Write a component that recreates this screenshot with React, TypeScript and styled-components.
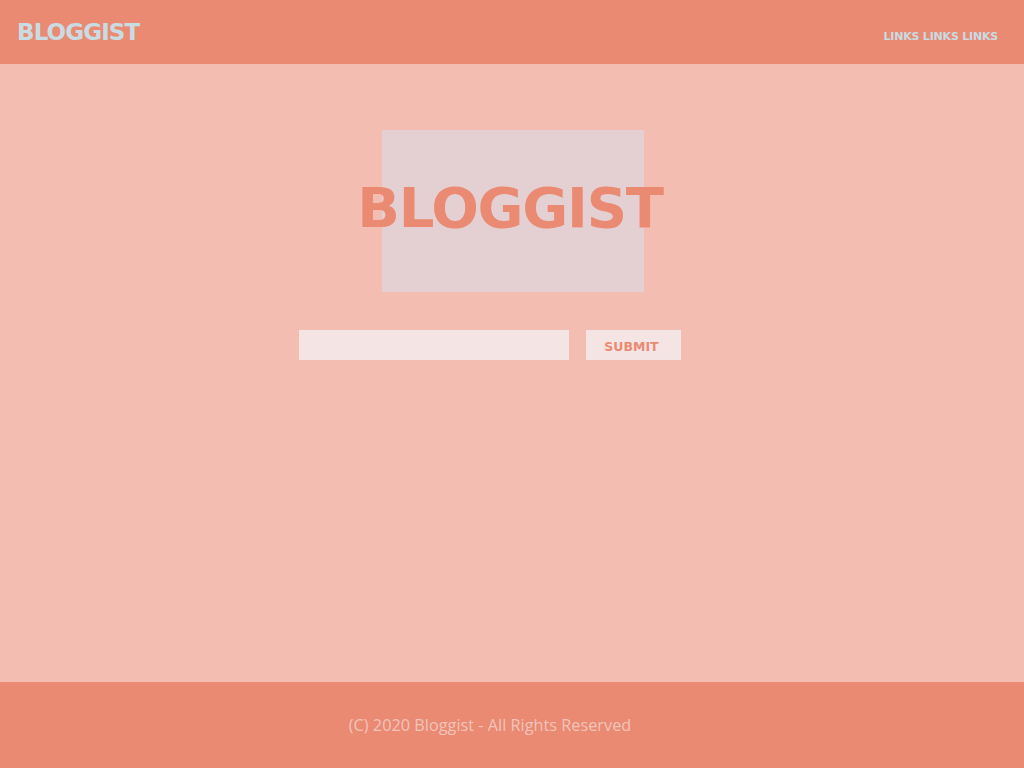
import React from "react";
import styled, { createGlobalStyle } from "styled-components";

const Global = createGlobalStyle`
  html, body { margin: 0; padding: 0; }
  body { font-family: "DejaVu Sans", sans-serif; background: #f3beb1; }
`;

const Page = styled.div`
  display: flex;
  flex-direction: column;
  height: 768px;
  width: 1024px;
`;

const Header = styled.header`
  height: 64px;
  background: #ea8a72;
  display: flex;
  align-items: center;
  justify-content: space-between;
  padding: 0 26px 0 17px;
`;

const Logo = styled.div`
  font-family: "DejaVu Sans", sans-serif;
  font-weight: 700;
  font-size: 23px;
  color: #c8dce2;
  letter-spacing: -0.9px;
  margin-top: 0px;
`;

const Links = styled.nav`
  font-family: "DejaVu Sans", sans-serif;
  font-weight: 700;
  font-size: 11px;
  letter-spacing: -0.2px;
  color: #c8dce2;
  margin-top: 8px;
`;

const Main = styled.main`
  flex: 1;
  display: flex;
  flex-direction: column;
  align-items: center;
  padding-top: 66px;
`;

const Hero = styled.div`
  width: 262px;
  height: 162px;
  background: #e4d0d2;
  display: flex;
  align-items: center;
  justify-content: center;
  margin-left: 2px;
`;

const HeroTitle = styled.h1`
  margin: 0;
  font-family: "DejaVu Sans", sans-serif;
  font-weight: 700;
  font-size: 56px;
  letter-spacing: -1.2px;
  color: #ea8a72;
  white-space: nowrap;
  margin-top: -8px;
  margin-left: -6px;
`;

const Form = styled.form`
  display: flex;
  gap: 17px;
  margin-top: 38px;
  margin-left: -44px;
`;

const Input = styled.input`
  width: 270px;
  height: 30px;
  box-sizing: border-box;
  border: none;
  background: #f5e4e4;
  outline: none;
  padding: 0 8px;
`;

const Button = styled.button`
  width: 95px;
  height: 30px;
  border: none;
  background: #f5e4e4;
  color: #ea8a72;
  font-family: "DejaVu Sans", sans-serif;
  font-weight: 700;
  font-size: 12.5px;
  padding: 0;
  padding-right: 4px;
  padding-top: 2px;
`;

const Footer = styled.footer`
  height: 86px;
  background: #ea8a72;
  display: flex;
  align-items: center;
  justify-content: center;
  padding-right: 44px;
`;

const FooterText = styled.p`
  margin: 0;
  font-family: "Open Sans", sans-serif;
  font-size: 16.3px;
  color: #f0c4ba;
`;

export default function App() {
  return (
    <Page>
      <Global />
      <Header>
        <Logo>BLOGGIST</Logo>
        <Links>LINKS LINKS LINKS</Links>
      </Header>
      <Main>
        <Hero>
          <HeroTitle>BLOGGIST</HeroTitle>
        </Hero>
        <Form onSubmit={(e) => e.preventDefault()}>
          <Input type="text" />
          <Button type="submit">SUBMIT</Button>
        </Form>
      </Main>
      <Footer>
        <FooterText>(C) 2020 Bloggist - All Rights Reserved</FooterText>
      </Footer>
    </Page>
  );
}
